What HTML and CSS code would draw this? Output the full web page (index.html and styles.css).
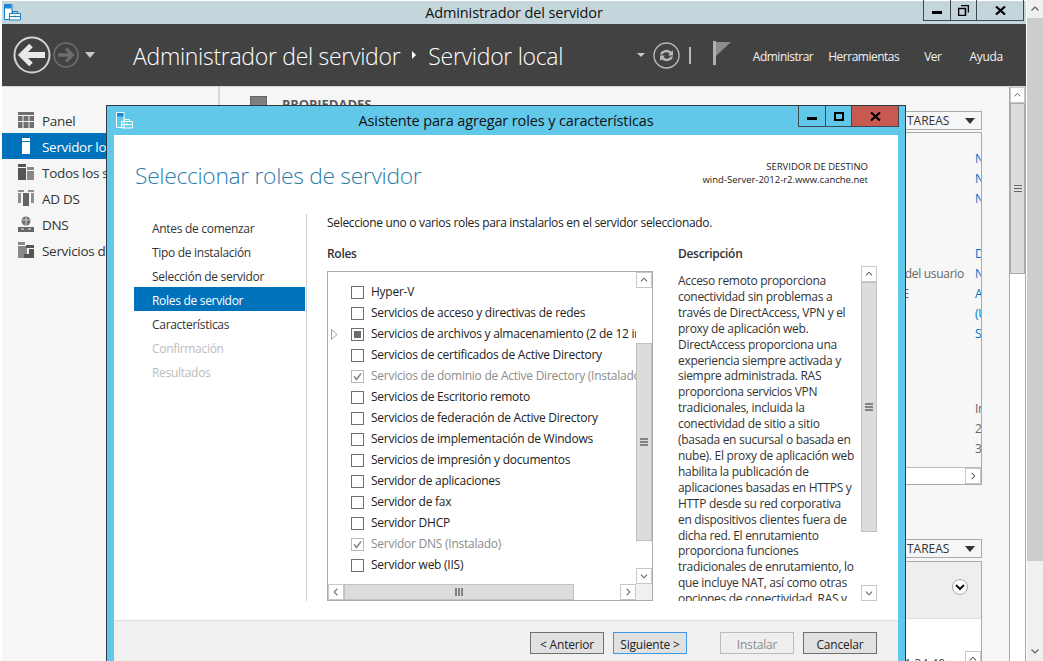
FILE: index.html
```html
<!DOCTYPE html>
<html lang="es">
<head>
    <meta charset="UTF-8">
    <meta name="viewport" content="width=device-width, initial-scale=1.0">
    <title>Administrador del servidor</title>
    <link rel="stylesheet" href="styles.css">
</head>
<body>
    <!-- shared icons -->
    <svg class="defs" width="0" height="0">
        <symbol id="i-app" viewBox="0 0 17 17">
            <path d="M.5 .5h7.500v15H.5z" stroke="currentColor"/>
            <path d="M1 1h6.500v3.500H1z" fill="#1a8ad4"/>
            <path d="M5.500 9.500h11v6.500h-11z" stroke="currentColor"/>
            <path d="M8.500 9V7.500h5V9M5.500 12.500h11M11 11.500v2" fill="none" stroke="currentColor"/>
        </symbol>
        <symbol id="i-up" viewBox="0 0 16 16"><path d="M4.500 9.500 8 6l3.500 3.500" fill="none" stroke="#606060" stroke-width="1.200"/></symbol>
        <symbol id="i-down" viewBox="0 0 16 16"><path d="M4.500 6.500 8 10l3.500-3.500" fill="none" stroke="#606060" stroke-width="1.200"/></symbol>
        <symbol id="i-left" viewBox="0 0 16 16"><path d="M9.500 4.500 6 8l3.500 3.500" fill="none" stroke="#606060" stroke-width="1.200"/></symbol>
        <symbol id="i-right" viewBox="0 0 16 16"><path d="M6.500 4.500 10 8l-3.500 3.500" fill="none" stroke="#606060" stroke-width="1.200"/></symbol>
        <symbol id="i-check" viewBox="0 0 13 13"><path d="M3 6.500 5.500 9.500 10 3.500" fill="none" stroke="#8c8c8c" stroke-width="1.700"/></symbol>
    </svg>

    <div class="desktop">
        <div class="window">
            <div class="titlebar">
                <svg class="app-icon"><use href="#i-app"/></svg>
                <div class="titlebar-text">Administrador del servidor</div>
                <div class="win-controls">
                    <div class="ctl ctl-min"><svg width="10" height="3"><rect width="10" height="3" fill="#000"/></svg></div>
                    <div class="ctl ctl-max"><svg width="11" height="11"><path d="M3 .5h7.500v7M.5 3.500h7v7h-7z" fill="none" stroke="#000" stroke-width="1.600"/></svg></div>
                    <div class="ctl ctl-close"><svg width="11" height="9"><path d="M1 .5l9 8M10 .5l-9 8" stroke="#000" stroke-width="2.200"/></svg></div>
                </div>
            </div>

            <div class="header">
                <svg class="nav-back" width="38" height="38" viewBox="0 0 38 38">
                    <circle cx="19" cy="19" r="17.500" fill="none" stroke="#d2d2d2" stroke-width="2"/>
                    <path d="M10 19H32" fill="none" stroke="#e8e8e8" stroke-width="6"/>
                    <path d="M18 9.500 8.500 19l9.500 9.500" fill="none" stroke="#e8e8e8" stroke-width="5"/>
                </svg>
                <svg class="nav-fwd" width="26" height="26" viewBox="0 0 26 26">
                    <circle cx="13" cy="13" r="12" fill="none" stroke="#6e6e6e" stroke-width="1.600"/>
                    <path d="M5 13H19" fill="none" stroke="#6e6e6e" stroke-width="3.500"/>
                    <path d="M13 6.500 19.500 13 13 19.500" fill="none" stroke="#6e6e6e" stroke-width="3"/>
                </svg>
                <div class="caret caret-nav"></div>
                <div class="crumb">Administrador del servidor</div>
                <div class="crumb-sep"></div>
                <div class="crumb crumb-last">Servidor local</div>
                <div class="header-right">
                    <div class="caret caret-small"></div>
                    <svg class="refresh" width="27" height="27" viewBox="0 0 27 27">
                        <circle cx="13.500" cy="13.500" r="12.500" fill="none" stroke="#b8b8b8" stroke-width="1.400"/>
                        <path d="M7 12.500a6.500 5.500 0 0 1 11-3l2-1v5h-5l1.500-1.800a4 3.500 0 0 0-7 .8zM20 14.500a6.500 5.500 0 0 1-11 3l-2 1v-5h5l-1.500 1.800a4 3.500 0 0 0 7-.8z" fill="#b8b8b8"/>
                    </svg>
                    <div class="tool-sep"></div>
                    <svg class="flag" width="18" height="24" viewBox="0 0 18 24">
                        <path d="M0 0h3v24H0z" fill="#b0b0b0"/>
                        <path d="M3 1h15L3 15z" fill="#8c8c8c"/>
                    </svg>
                    <nav class="menu">
                        <span class="menu-item m-admin">Administrar</span>
                        <span class="menu-item m-tools">Herramientas</span>
                        <span class="menu-item m-ver">Ver</span>
                        <span class="menu-item m-help">Ayuda</span>
                    </nav>
                </div>
            </div>

            <div class="content">
                <aside class="sidebar">
                    <div class="side-item">
                        <svg class="side-icon" width="16" height="16" viewBox="0 0 16 16"><path d="M0 0h16v3H0zM0 4h4.500v5H0zM5.500 4h5v5h-5zM11.500 4H16v5h-4.500zM0 10h4.500v6H0zM5.500 10h5v6h-5zM11.500 10H16v6h-4.500z" fill="#6f6f6f"/></svg>
                        Panel
                    </div>
                    <div class="side-item selected">
                        <svg class="side-icon" width="16" height="16" viewBox="0 0 16 16"><path d="M4 0h8v3H4zM4 4h8v12H4z" fill="#fff"/></svg>
                        Servidor local
                    </div>
                    <div class="side-item">
                        <svg class="side-icon" width="16" height="16" viewBox="0 0 16 16"><path d="M0 0h8v3H0zM0 4h8v12H0z" fill="#555"/><path d="M9 3h7v3H9zM9 7h7v9H9z" fill="#888"/></svg>
                        Todos los servidores
                    </div>
                    <div class="side-item">
                        <svg class="side-icon" width="16" height="16" viewBox="0 0 16 16"><path d="M5 3h6v13H5z" fill="#666"/><path d="M0 0h6v2H0zM10 0h6v2h-6zM0 3h3v10H0zM13 3h3v10h-3z" fill="#8f8f8f"/></svg>
                        AD DS
                    </div>
                    <div class="side-item">
                        <svg class="side-icon" width="16" height="16" viewBox="0 0 16 16"><circle cx="8" cy="5" r="4.500" fill="#6f6f6f"/><path d="M4 4h8M8 .5v9" stroke="#cfcfcf"/><path d="M0 11h16v5H0z" fill="#666"/><path d="M3 13h3M10 13h3" stroke="#eee"/></svg>
                        DNS
                    </div>
                    <div class="side-item">
                        <svg class="side-icon" width="16" height="16" viewBox="0 0 16 16"><path d="M0 0h7v3H0zM0 4h9v12H0z" fill="#888"/><path d="M8 3h8v3H8zM11 7h5v9H6v-4h5z" fill="#555"/></svg>
                        Servicios de archivos
                    </div>
                </aside>

                <main class="main">
                    <section class="tile">
                        <div class="tile-head">
                            <div class="tile-icon"></div>
                            <div class="tile-title">PROPIEDADES</div>
                            <div class="task-btn">TAREAS<span class="caret caret-dark"></span></div>
                        </div>
                        <div class="panel panel-props">
                            <div class="prop-group">
                                <div class="prop-row"><span class="prop-name">Última actualización</span><span class="prop-val">Nunca</span></div>
                                <div class="prop-row"><span class="prop-name">Windows Update</span><span class="prop-val">No configurado</span></div>
                                <div class="prop-row"><span class="prop-name">Última búsqueda</span><span class="prop-val">Nunca</span></div>
                            </div>
                            <div class="prop-group">
                                <div class="prop-row"><span class="prop-name">Informe de errores</span><span class="prop-val">Desactivado</span></div>
                                <div class="prop-row"><span class="prop-name">Programa para la mejora de la experiencia del usuario</span><span class="prop-val">No participa</span></div>
                                <div class="prop-row"><span class="prop-name prop-name-wide">Configuración de seguridad mejorada de IE</span><span class="prop-val">Activada</span></div>
                                <div class="prop-row"><span class="prop-name">Zona horaria</span><span class="prop-val">(UTC-05:00)</span></div>
                                <div class="prop-row"><span class="prop-name">Id. del producto</span><span class="prop-val">Sin activar</span></div>
                            </div>
                            <div class="prop-group prop-group-info">
                                <div class="prop-row"><span class="prop-name">Procesadores</span><span class="prop-val">Intel(R)</span></div>
                                <div class="prop-row"><span class="prop-name">Memoria instalada</span><span class="prop-val">2 GB</span></div>
                                <div class="prop-row"><span class="prop-name">Espacio total en disco</span><span class="prop-val">32 GB</span></div>
                            </div>
                            <div class="props-hscroll">
                                <div class="sb-btn sb-btn-h"><svg width="16" height="16"><use href="#i-right"/></svg></div>
                            </div>
                        </div>
                    </section>
                    <section class="tile tile-events">
                        <div class="tile-head tile-head-events">
                            <div class="task-btn">TAREAS<span class="caret caret-dark"></span></div>
                        </div>
                        <div class="panel panel-events">
                            <div class="events-head">
                                <div class="expand-circle"><svg width="10" height="7"><path d="M1 1l4 4 4-4" fill="none" stroke="#111" stroke-width="2"/></svg></div>
                            </div>
                            <div class="events-body">
                                <span class="event-time">1:34:40</span>
                                <div class="sb-btn sb-btn-events"><svg width="16" height="16"><use href="#i-up"/></svg></div>
                            </div>
                        </div>
                    </section>
                </main>

                <div class="main-scroll">
                    <div class="sb-btn"><svg width="16" height="16"><use href="#i-up"/></svg></div>
                    <div class="main-thumb"><svg width="8" height="8"><path d="M0 .5h8M0 3.500h8M0 6.500h8" stroke="#666"/></svg></div>
                </div>
            </div>
        </div>

        <div class="page-scroll">
            <div class="page-up"><svg width="16" height="16"><use href="#i-up"/></svg></div>
            <div class="page-thumb"></div>
            <div class="page-down"><svg width="16" height="16"><use href="#i-down"/></svg></div>
        </div>

        <!-- wizard sits over the server manager window -->
        <div class="dialog">
            <div class="dlg-titlebar">
                <svg class="app-icon dlg-icon"><use href="#i-app"/></svg>
                <div class="dlg-title">Asistente para agregar roles y características</div>
                <div class="win-controls dlg-controls">
                    <div class="ctl ctl-min"><svg width="10" height="3"><rect width="10" height="3" fill="#000"/></svg></div>
                    <div class="ctl ctl-max"><svg width="10" height="9"><rect x="1" y="1" width="8" height="7" fill="none" stroke="#000" stroke-width="2"/></svg></div>
                    <div class="ctl ctl-close ctl-red"><svg width="11" height="9"><path d="M1 .5l9 8M10 .5l-9 8" stroke="#000" stroke-width="2.200"/></svg></div>
                </div>
            </div>
            <div class="dlg-body">
                <div class="dlg-head">
                    <h1 class="dlg-heading">Seleccionar roles de servidor</h1>
                    <div class="target">
                        <div>SERVIDOR DE DESTINO</div>
                        <div>wind-Server-2012-r2.www.canche.net</div>
                    </div>
                </div>
                <div class="dlg-main">
                    <ul class="steps">
                        <li>Antes de comenzar</li>
                        <li>Tipo de instalación</li>
                        <li>Selección de servidor</li>
                        <li class="current">Roles de servidor</li>
                        <li>Características</li>
                        <li class="off">Confirmación</li>
                        <li class="off">Resultados</li>
                    </ul>
                    <div class="page">
                        <p class="intro">Seleccione uno o varios roles para instalarlos en el servidor seleccionado.</p>
                        <div class="columns">
                            <div class="col-roles">
                                <div class="col-label">Roles</div>
                                <div class="rolebox">
                                    <div class="role-list">
                                        <div class="role"><span class="chk"></span>Hyper-V</div>
                                        <div class="role"><span class="chk"></span>Servicios de acceso y directivas de redes</div>
                                        <div class="role"><svg class="expander" width="7" height="11"><path d="M.5 .5 6 5.500.5 10.500z" fill="#fff" stroke="#a0a0a0"/></svg><span class="chk chk-part"></span>Servicios de archivos y almacenamiento (2 de 12 instalados)</div>
                                        <div class="role"><span class="chk"></span>Servicios de certificados de Active Directory</div>
                                        <div class="role role-off"><span class="chk chk-on"><svg width="13" height="13"><use href="#i-check"/></svg></span>Servicios de dominio de Active Directory (Instalado)</div>
                                        <div class="role"><span class="chk"></span>Servicios de Escritorio remoto</div>
                                        <div class="role"><span class="chk"></span>Servicios de federación de Active Directory</div>
                                        <div class="role"><span class="chk"></span>Servicios de implementación de Windows</div>
                                        <div class="role"><span class="chk"></span>Servicios de impresión y documentos</div>
                                        <div class="role"><span class="chk"></span>Servidor de aplicaciones</div>
                                        <div class="role"><span class="chk"></span>Servidor de fax</div>
                                        <div class="role"><span class="chk"></span>Servidor DHCP</div>
                                        <div class="role role-off"><span class="chk chk-on"><svg width="13" height="13"><use href="#i-check"/></svg></span>Servidor DNS (Instalado)</div>
                                        <div class="role"><span class="chk"></span>Servidor web (IIS)</div>
                                    </div>
                                    <div class="vscroll">
                                        <div class="sb-btn"><svg width="16" height="16"><use href="#i-up"/></svg></div>
                                        <div class="sb-track">
                                            <div class="sb-thumb thumb-roles"><svg width="8" height="8"><path d="M0 1h8M0 4h8M0 7h8" stroke="#666" stroke-width="1.500"/></svg></div>
                                        </div>
                                        <div class="sb-btn"><svg width="16" height="16"><use href="#i-down"/></svg></div>
                                    </div>
                                    <div class="hscroll">
                                        <div class="sb-btn"><svg width="16" height="16"><use href="#i-left"/></svg></div>
                                        <div class="sb-thumb thumb-h"><svg width="8" height="8"><path d="M1 0v8M4 0v8M7 0v8" stroke="#666" stroke-width="1.500"/></svg></div>
                                        <div class="hscroll-rest"></div>
                                        <div class="sb-btn"><svg width="16" height="16"><use href="#i-right"/></svg></div>
                                    </div>
                                    <div class="corner"></div>
                                </div>
                            </div>
                            <div class="col-desc">
                                <div class="col-label">Descripción</div>
                                <div class="descbox">
                                    <div class="desc-text">Acceso remoto proporciona<br>conectividad sin problemas a<br>través de DirectAccess, VPN y el<br>proxy de aplicación web.<br>DirectAccess proporciona una<br>experiencia siempre activada y<br>siempre administrada. RAS<br>proporciona servicios VPN<br>tradicionales, incluida la<br>conectividad de sitio a sitio<br>(basada en sucursal o basada en<br>nube). El proxy de aplicación web<br>habilita la publicación de<br>aplicaciones basadas en HTTPS y<br>HTTP desde su red corporativa<br>en dispositivos clientes fuera de<br>dicha red. El enrutamiento<br>proporciona funciones<br>tradicionales de enrutamiento, lo<br>que incluye NAT, así como otras<br>opciones de conectividad, RAS y</div>
                                    <div class="vscroll vscroll-desc">
                                        <div class="sb-btn"><svg width="16" height="16"><use href="#i-up"/></svg></div>
                                        <div class="sb-track">
                                            <div class="sb-thumb thumb-desc"><svg width="8" height="8"><path d="M0 1h8M0 4h8M0 7h8" stroke="#666" stroke-width="1.500"/></svg></div>
                                        </div>
                                        <div class="sb-btn"><svg width="16" height="16"><use href="#i-down"/></svg></div>
                                    </div>
                                </div>
                            </div>
                        </div>
                    </div>
                </div>
                <div class="dlg-footer">
                    <button class="btn">&lt; Anterior</button>
                    <button class="btn btn-default">Siguiente &gt;</button>
                    <button class="btn btn-off">Instalar</button>
                    <button class="btn">Cancelar</button>
                </div>
            </div>
        </div>
    </div>
</body>
</html>
```

FILE: styles.css
```css
* {
    box-sizing: border-box;
}

html, body {
    margin: 0;
    padding: 0;
    height: 661px;
    overflow: hidden;
    background: #fff;
}

body {
    font-family: "Open Sans", "Noto Sans", sans-serif;
    font-size: 12px;
    color: #222;
}

.defs {
    position: absolute;
}

.desktop {
    position: relative;
    display: flex;
    width: 1043px;
    height: 661px;
    overflow: hidden;
}

/* outer window */
.window {
    width: 1024px;
    margin: 1px 1px 0 2px;
    display: flex;
    flex-direction: column;
}

.titlebar, .dlg-titlebar {
    display: grid;
    grid-template-columns: 1fr auto 1fr;
}

.titlebar {
    height: 23px;
    background: #c4d6dc;
}

.app-icon {
    width: 17px;
    height: 17px;
    margin: 3px 0 0 2px;
    color: #1a7fc8;
    fill: #fff;
}

.titlebar-text {
    font-size: 14.500px;
    letter-spacing: -0.13px;
    line-height: 24px;
    color: #111;
}

.win-controls {
    justify-self: end;
    display: flex;
    height: 21px;
    margin: -1px 2px 0 0;
    border: 1px solid #3c4a50;
    border-top: none;
}

.ctl {
    display: flex;
    align-items: center;
    justify-content: center;
}

.ctl-min {
    width: 27px;
    border-right: 1px solid #3c4a50;
    padding-top: 4px;
}

.ctl-max {
    width: 26px;
    border-right: 1px solid #3c4a50;
}

.ctl-close {
    flex: 1;
    width: 46px;
}

.header {
    height: 62px;
    background: #424242;
    display: flex;
    align-items: center;
}

.nav-back {
    margin: 0 0 0 11px;
}

.nav-fwd {
    margin-left: 2px;
}

.caret {
    display: inline-block;
    width: 0;
    height: 0;
    border-left: 5px solid transparent;
    border-right: 5px solid transparent;
    border-top: 6px solid #c8c8c8;
}

.caret-nav {
    margin: 0 38px 0 6px;
}

.crumb {
    margin-top: 1px;
    font-weight: 300;
    font-size: 23px;
    letter-spacing: -0.3px;
    color: #fff;
    white-space: nowrap;
}

.crumb-sep {
    width: 0;
    height: 0;
    margin: 0 12px 0 12px;
    border-top: 4px solid transparent;
    border-bottom: 4px solid transparent;
    border-left: 4px solid #fff;
}

.header-right {
    margin-left: auto;
    display: flex;
    align-items: center;
}

.caret-small {
    border-left-width: 4px;
    border-right-width: 4px;
    border-top-width: 4px;
    margin-right: 8px;
}

.tool-sep {
    width: 2px;
    height: 17px;
    background: #b8b8b8;
    margin: 0 22px 0 9px;
}

.flag {
    margin: -5px 22px 0 0;
}

.menu {
    display: flex;
    margin-top: 2px;
    color: #f2f2f2;
    white-space: nowrap;
}

.menu-item {
    letter-spacing: -0.5px;
}

.m-admin { margin-right: 15px; }
.m-tools { margin-right: 25px; }
.m-ver { margin-right: 28px; }
.m-help { margin-right: 23px; letter-spacing: -0.3px; }

.content {
    flex: 1;
    min-height: 0;
    display: flex;
    background: #f6f6f6;
    border-top: 1px solid #d8d8d8;
}

/* left navigation */
.sidebar {
    width: 218px;
    border-right: 2px solid #d4d4d4;
    padding-top: 20px;
    white-space: nowrap;
    overflow: hidden;
}

.side-item {
    display: flex;
    align-items: center;
    height: 26px;
    padding: 2px 0 0 16px;
    font-size: 13.500px;
    letter-spacing: -0.3px;
    color: #333;
}

.side-item.selected {
    background: #0072bc;
    color: #fff;
}

.side-icon {
    margin: -2px 8px 0 0;
}

/* content behind the wizard */
.main {
    flex: 1;
    min-width: 0;
    overflow: hidden;
    padding: 9px 27px 0 26px;
}

.tile-head {
    display: flex;
    height: 36px;
    align-items: flex-start;
}

.tile-icon {
    width: 17px;
    height: 12px;
    margin: 0 15px 0 4px;
    border: 1px solid #666;
    border-bottom-width: 3px;
    background: #808080;
}

.tile-title {
    font-weight: 700;
    font-size: 13px;
    line-height: 16px;
    color: #5a5a5a;
}

.task-btn {
    display: flex;
    align-items: center;
    justify-content: space-between;
    width: 104px;
    height: 19px;
    margin: 15px 0 0 auto;
    padding: 0 6px 0 28px;
    background: #f6f6f6;
    border: 1px solid #aaa;
    color: #333;
}

.caret-dark {
    border-top-color: #333;
}

.panel {
    border: 1px solid #aaa;
    overflow: hidden;
}

.panel-props {
    position: relative;
    height: 353px;
    padding-top: 15px;
    background: #f7f7f7;
}

.prop-group {
    margin-bottom: 35px;
}

.prop-group-info {
    margin-top: 55px;
}

.prop-row {
    display: flex;
    height: 20px;
    align-items: center;
    white-space: nowrap;
}

.prop-name {
    flex: 0 0 728px;
    padding-left: 430px;
    letter-spacing: -0.3px;
    color: #666;
}

.prop-name-wide {
    letter-spacing: -0.22px;
}

.prop-val {
    color: #0072c6;
    letter-spacing: -0.3px;
}

.prop-group-info .prop-val {
    color: #666;
}

.props-hscroll {
    position: absolute;
    left: 0;
    right: 0;
    bottom: 0;
    height: 17px;
    display: flex;
    justify-content: flex-end;
    background: #fff;
    border-top: 1px solid #bbb;
}

.tile-events {
    height: 200px;
}

.tile-head-events {
    height: 76px;
    padding-top: 54px;
}

.tile-head-events .task-btn {
    margin-top: 0;
}

.panel-events {
    height: 200px;
}

.events-head {
    height: 57px;
    background: #eeeeee;
    border-bottom: 1px solid #ddd;
    display: flex;
    justify-content: flex-end;
    padding: 17px 13px 0 0;
}

.expand-circle {
    width: 16px;
    height: 16px;
    border: 1px solid #aaa;
    border-radius: 50%;
    background: #fff;
    display: flex;
    align-items: center;
    justify-content: center;
}

.events-body {
    background: #fff;
    height: 100px;
    display: flex;
    justify-content: flex-end;
    padding-top: 32px;
}

.event-time {
    margin-right: 20px;
    margin-top: 5px;
    line-height: 16px;
    color: #444;
}

.sb-btn-events {
    height: 20px;
}

/* scrollbars */
.main-scroll {
    width: 17px;
    border-left: 1px solid #aaa;
    border-right: 1px solid #aaa;
    background: #fff;
}

.sb-btn {
    flex: none;
    width: 16px;
    height: 16px;
    background: #fff;
    border: 1px solid #c8c8c8;
    display: flex;
    align-items: center;
    justify-content: center;
}

.main-scroll .sb-btn {
    width: 15px;
}

.main-thumb {
    height: 171px;
    background: #dcdcdc;
    border: 1px solid #aaa;
    display: flex;
    align-items: center;
    justify-content: center;
}

.page-scroll {
    width: 16px;
    height: 661px;
    display: flex;
    flex-direction: column;
    background: #f0f0f0;
}

.page-up, .page-down {
    height: 18px;
    display: flex;
    align-items: center;
    justify-content: center;
}

.page-up {
    background: #f0f0f0;
}

.page-thumb {
    height: 543px;
    background: #cdcdcd;
}

.page-down {
    margin-top: auto;
    padding-bottom: 2px;
}

/* wizard */
.dialog {
    position: absolute;
    left: 106px;
    top: 105px;
    width: 800px;
    height: 600px;
    background: #62c8ea;
    border: 1px solid #2d3a40;
    border-bottom: none;
    padding: 0 7px;
}

.dlg-titlebar {
    height: 29px;
    margin: 0 -7px;
}

.dlg-icon {
    margin: 6px 0 0 9px;
    color: #fff;
    fill: none;
}

.dlg-title {
    font-size: 14.500px;
    letter-spacing: -0.13px;
    line-height: 29px;
    color: #111;
}

.dlg-controls {
    margin: 0 6px 0 0;
}

.dlg-controls .ctl-close {
    flex: none;
}

.ctl-red {
    background: #c75950;
}

.dlg-body {
    background: #fff;
    height: 560px;
    display: flex;
    flex-direction: column;
}

.dlg-head {
    height: 79px;
    display: flex;
    justify-content: space-between;
    align-items: flex-start;
    padding: 24px 30px 0 21px;
}

.dlg-heading {
    margin: 0;
    font-weight: 300;
    font-size: 22.800px;
    line-height: 34px;
    letter-spacing: -0.3px;
    color: #2a7dab;
}

.target {
    margin-top: 1px;
    font-size: 9.500px;
    line-height: 13px;
    text-align: right;
}

.dlg-main {
    display: flex;
    height: 407px;
    padding-left: 20px;
    border-bottom: 1px solid #dedede;
}

.steps {
    list-style: none;
    margin: 0;
    padding: 1px 0 0;
    width: 173px;
    height: 387px;
    border-right: 1px solid #cfcfcf;
}

.steps li {
    height: 24px;
    line-height: 28px;
    padding-left: 18px;
    margin-right: 1px;
    letter-spacing: -0.3px;
    color: #333;
}

.steps li.current {
    background: #0072bc;
    color: #fff;
}

.steps li.off {
    color: #bcbcbc;
}

.page {
    padding-left: 20px;
}

.intro {
    margin: 0;
    height: 31px;
    line-height: 17px;
    letter-spacing: -0.32px;
}

.columns {
    display: flex;
    gap: 25px;
}

.col-label {
    height: 17px;
    line-height: 17px;
    font-weight: 600;
    letter-spacing: -0.3px;
    color: #333;
}

.col-label + .rolebox {
    margin-top: 9px;
}

.rolebox {
    width: 326px;
    height: 330px;
    border: 1px solid #aaa;
    display: grid;
    grid-template-columns: 308px 16px;
    grid-template-rows: 312px 16px;
    background: #f0f0f0;
}

.role-list {
    background: #fff;
    overflow: hidden;
    padding-top: 10px;
}

.role {
    position: relative;
    display: flex;
    align-items: center;
    height: 21px;
    padding: 0 0 2px 23px;
    white-space: nowrap;
    letter-spacing: -0.25px;
    color: #222;
}

.role-off {
    color: #8c8c8c;
}

.expander {
    position: absolute;
    left: 3px;
    top: 5px;
}

.chk {
    flex: none;
    width: 13px;
    height: 13px;
    margin: 2px 7px 0 0;
    border: 1px solid #707070;
    background: #fff;
    display: flex;
    align-items: center;
    justify-content: center;
}

.chk svg {
    margin: -1px;
}

.chk-part::before {
    content: "";
    width: 7px;
    height: 7px;
    background: #6d6d6d;
}

.chk-on {
    border-color: #b8b8b8;
}

.vscroll {
    display: flex;
    flex-direction: column;
    background: #fff;
}

.sb-track {
    flex: 1;
    position: relative;
}

.sb-thumb {
    background: #dcdcdc;
    border: 1px solid #c0c0c0;
    display: flex;
    align-items: center;
    justify-content: center;
}

.thumb-roles {
    height: 198px;
    margin-top: 55px;
}

.thumb-desc {
    height: 250px;
}

.hscroll {
    display: flex;
    background: #fff;
}

.thumb-h {
    width: 230px;
}

.hscroll-rest {
    flex: 1;
}

.corner {
    background: #f0f0f0;
}

.col-desc {
    width: 199px;
}

.descbox {
    display: flex;
    justify-content: space-between;
    height: 335px;
    margin-top: 4px;
}

.desc-text {
    height: 335px;
    overflow: hidden;
    padding-top: 7px;
    line-height: 15.900px;
    white-space: nowrap;
    letter-spacing: -0.3px;
    color: #333;
}

.vscroll-desc {
    width: 16px;
}

.dlg-footer {
    flex: 1;
    background: #f0f0f0;
    padding: 11px 21px 0 0;
    display: flex;
    justify-content: flex-end;
    align-items: flex-start;
    gap: 9px;
}

.btn {
    width: 74px;
    height: 22px;
    padding: 2px 0 0;
    font-family: inherit;
    font-size: 12px;
    letter-spacing: -0.2px;
    color: #222;
    background: #e1e1e1;
    border: 1px solid #707070;
}

.btn-default {
    border-color: #3c9be8;
}

.btn-off {
    background: #efefef;
    border-color: #bcbcbc;
    color: #8a8a8a;
}

.btn-default + .btn-off {
    margin-left: 24px;
}
```
